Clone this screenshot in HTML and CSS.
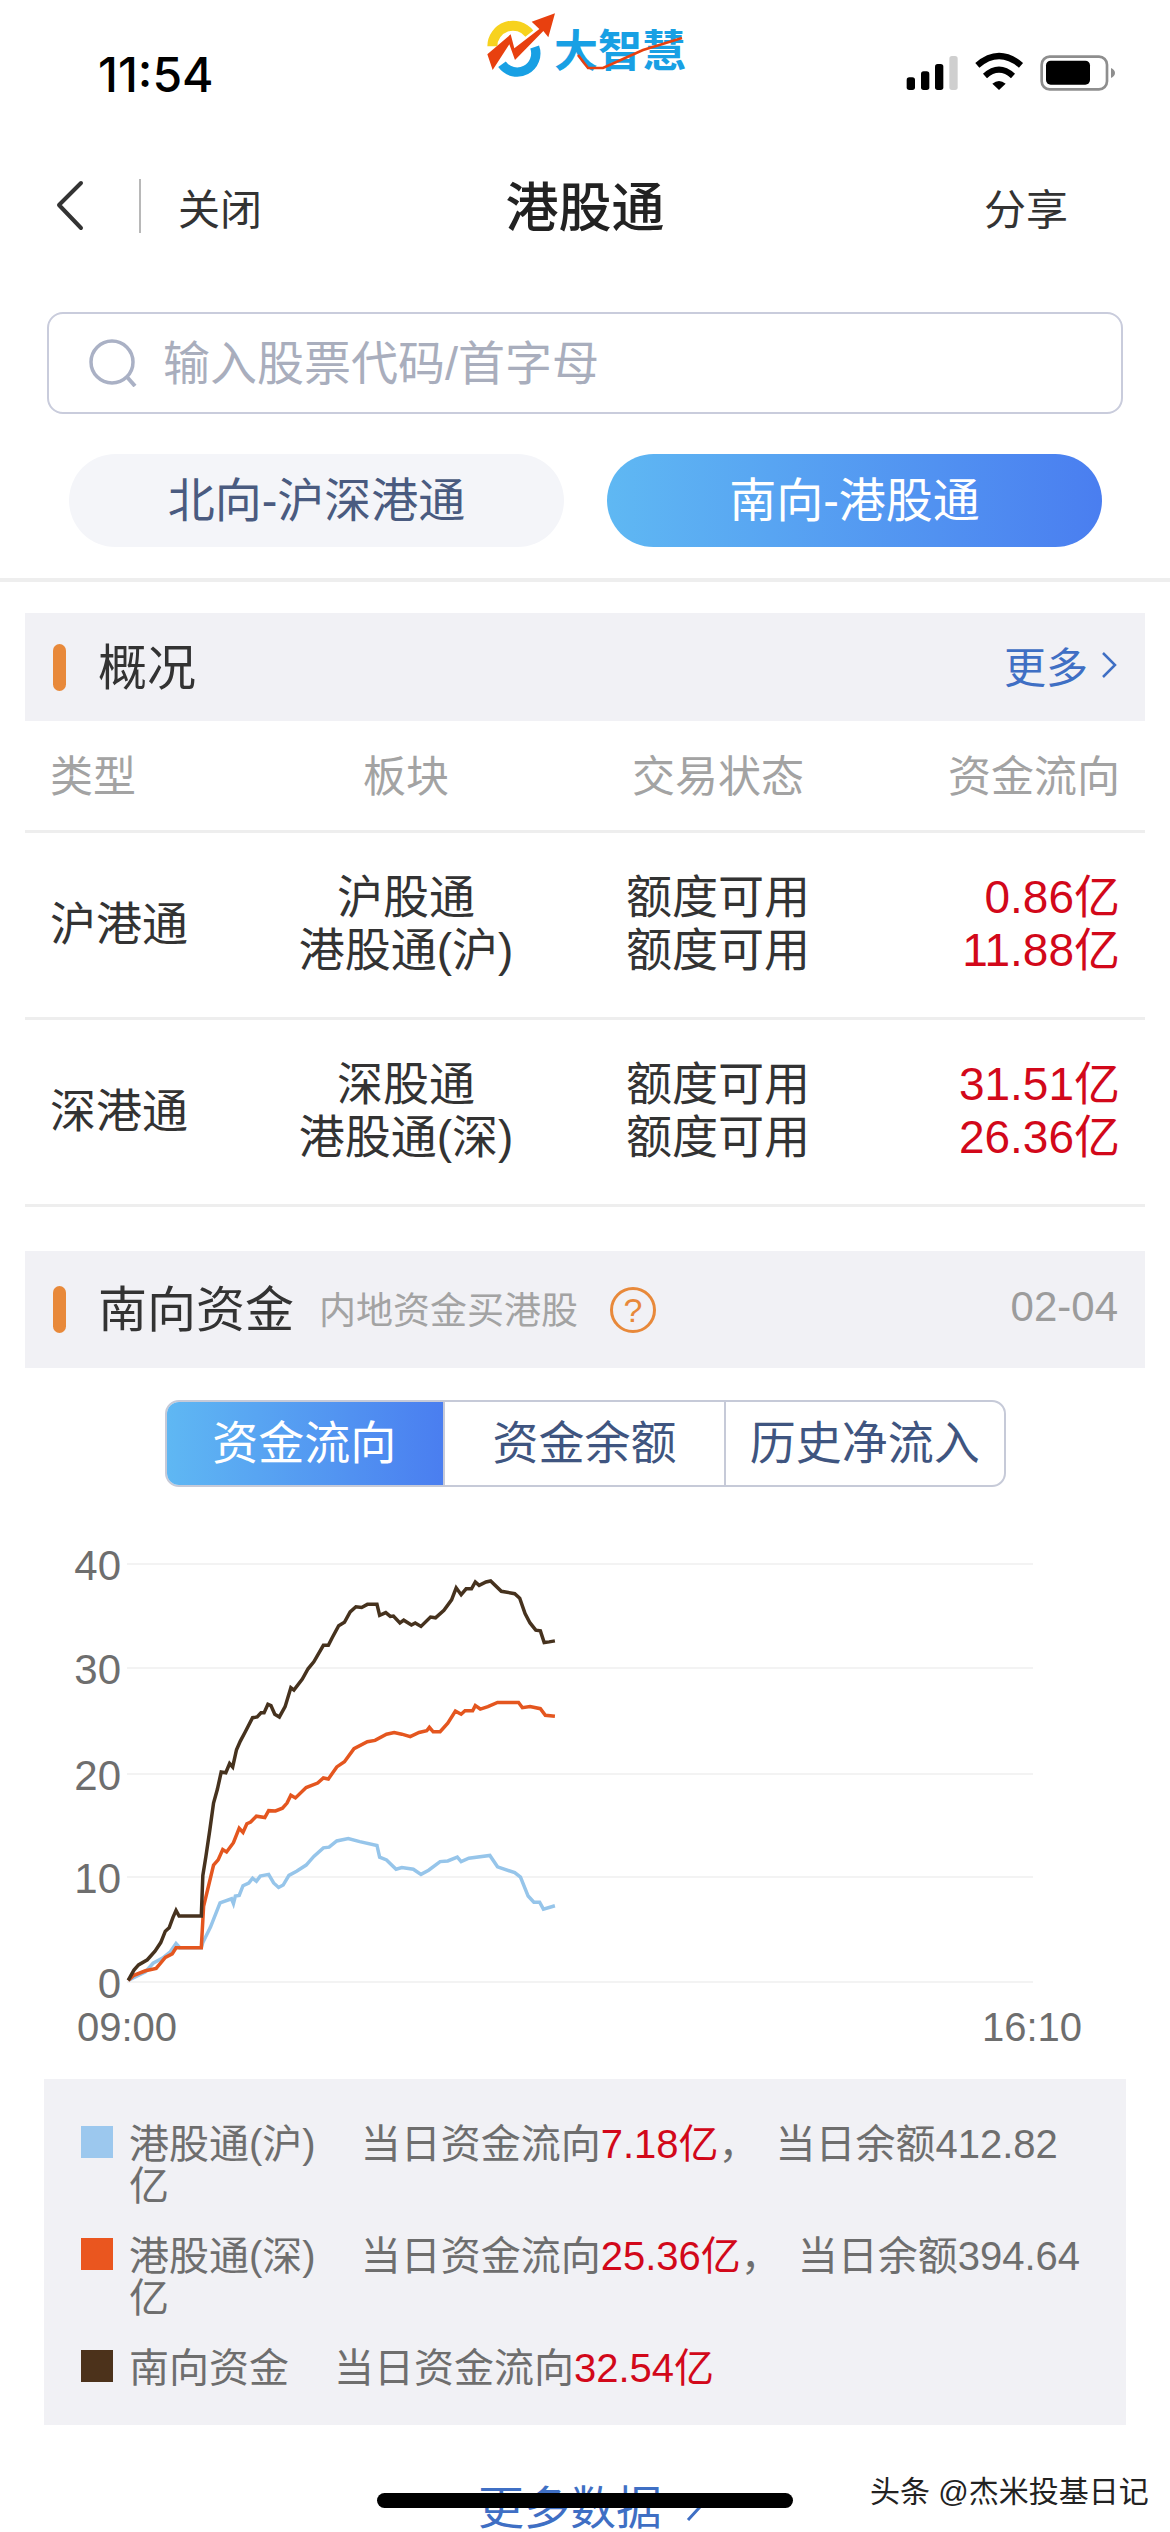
FILE: index.html
```html
<!DOCTYPE html>
<html lang="zh-CN">
<head>
    <meta charset="UTF-8">
    <title>港股通</title>
    <link rel="stylesheet" href="styles.css">
</head>
<body>
    <div class="page">
        <div class="status">
            <span class="time">11:54</span>
            <svg class="status-icons" width="235" height="60" viewBox="0 0 705 180">
                <rect x="35" y="100" width="25" height="38" rx="8"/>
                <rect x="78" y="82" width="25" height="56" rx="8"/>
                <rect x="120" y="60" width="25" height="78" rx="8"/>
                <rect x="163" y="36" width="25" height="102" rx="8" fill="#cfcfcf"/>
                <path d="M247 64Q312 8 378 64" fill="none" stroke="#000" stroke-width="19"/>
                <path d="M270 96Q312 58 354 96" fill="none" stroke="#000" stroke-width="18"/>
                <path d="M292 119Q312 103 332 119L312 138Z"/>
                <rect x="440" y="38" width="196" height="98" rx="24" fill="none" stroke="#8e8e8e" stroke-width="8"/>
                <rect x="453" y="50" width="132" height="72" rx="14"/>
                <path d="M648 72Q660 78 660 87Q660 96 648 102Z" fill="#8e8e8e"/>
            </svg>
        </div>

        <div class="logo">
            <svg width="110" height="75" viewBox="0 0 330 225">
                <path d="M37 124A62 62 0 0 1 148 86" fill="none" stroke="#f7d21e" stroke-width="30"/>
                <path d="M164 126A56 56 0 0 1 66 178" fill="none" stroke="#18a0e4" stroke-width="28"/>
                <path d="M22 148L92 88L103 130L178 72L155 50L225 25L205 97L190 78L105 165L88 118L38 195Z" fill="#e8400f"/>
            </svg>
            <span class="logo-text">大智慧</span>
            <svg class="logo-swoosh" width="110" height="40" viewBox="0 0 110 40">
                <path d="M4 18L14 31H29L69 13L108 1" fill="none" stroke="#e8400f" stroke-width="2.5"/>
            </svg>
        </div>

        <div class="nav">
            <div class="nav-left">
                <svg width="30" height="52" viewBox="0 0 30 52">
                    <path d="M26 3L4 25L26 48" fill="none" stroke="#333" stroke-width="4" stroke-linecap="round" stroke-linejoin="round"/>
                </svg>
                <span class="nav-sep"></span>
                <span>关闭</span>
            </div>
            <div class="nav-title">港股通</div>
            <div class="nav-right">分享</div>
        </div>

        <div class="search">
            <svg width="48" height="48" viewBox="0 0 48 48">
                <circle cx="23" cy="23" r="21" fill="none" stroke="#aab1c5" stroke-width="3.5"/>
                <path d="M38 38L46 47" fill="none" stroke="#aab1c5" stroke-width="4"/>
            </svg>
            <span class="search-text">输入股票代码/首字母</span>
        </div>

        <div class="tabs">
            <div class="tab">北向-沪深港通</div>
            <div class="tab active">南向-港股通</div>
        </div>

        <div class="rule"></div>

        <div class="sec-head first">
            <span class="sec-mark"></span>
            <span class="sec-title">概况</span>
            <span class="more">更多
                <svg width="18" height="30" viewBox="0 0 18 30"><path d="M3 3L15 15L3 27" fill="none" stroke="#3f6fc4" stroke-width="2.5"/></svg>
            </span>
        </div>

        <div class="grid grid-head">
            <div>类型</div>
            <div class="mid">板块</div>
            <div class="mid">交易状态</div>
            <div class="end">资金流向</div>
        </div>
        <div class="grid grid-row">
            <div>沪港通</div>
            <div class="mid">沪股通<br>港股通(沪)</div>
            <div class="mid">额度可用<br>额度可用</div>
            <div class="end red">0.86亿<br>11.88亿</div>
        </div>
        <div class="grid grid-row">
            <div>深港通</div>
            <div class="mid">深股通<br>港股通(深)</div>
            <div class="mid">额度可用<br>额度可用</div>
            <div class="end red">31.51亿<br>26.36亿</div>
        </div>

        <div class="sec-head second">
            <span class="sec-mark"></span>
            <span class="sec-title">南向资金</span>
            <span class="sec-sub">内地资金买港股</span>
            <span class="help">?</span>
            <span class="sec-date">02-04</span>
        </div>

        <div class="seg">
            <div class="seg-item active">资金流向</div>
            <div class="seg-item">资金余额</div>
            <div class="seg-item">历史净流入</div>
        </div>

        <svg class="chart" width="1170" height="560" viewBox="0 1500 1170 560">
            <g class="grid-lines">
                <line x1="127" x2="1033" y1="1564" y2="1564"/>
                <line x1="127" x2="1033" y1="1668" y2="1668"/>
                <line x1="127" x2="1033" y1="1774" y2="1774"/>
                <line x1="127" x2="1033" y1="1877" y2="1877"/>
                <line x1="127" x2="1033" y1="1982" y2="1982"/>
            </g>
            <g class="axis">
                <text x="121" y="1580">40</text>
                <text x="121" y="1684">30</text>
                <text x="121" y="1790">20</text>
                <text x="121" y="1893">10</text>
                <text x="121" y="1998">0</text>
            </g>
            <text class="axis-x" x="77" y="2041">09:00</text>
            <text class="axis-x" x="982" y="2041">16:10</text>
            <g transform="translate(0 1500) scale(.3827 .3444)">
                <polyline class="line blue" points="335,1395 380,1370 400,1345 425,1330 445,1312 460,1288 470,1300 526,1300 530,1285 550,1240 575,1170 605,1158 610,1172 615,1150 625,1148 635,1120 650,1112 660,1098 670,1107 680,1092 702,1087 715,1112 728,1125 740,1118 755,1090 775,1078 800,1060 820,1035 845,1010 860,1008 880,990 910,983 940,992 985,1003 992,1037 1010,1045 1035,1072 1050,1067 1080,1072 1100,1087 1120,1075 1150,1050 1170,1048 1195,1037 1205,1050 1225,1040 1280,1032 1300,1065 1345,1082 1360,1095 1380,1150 1395,1168 1410,1168 1420,1188 1450,1178"/>
                <polyline class="line orange" points="335,1395 350,1380 380,1367 408,1360 432,1328 450,1318 460,1300 526,1300 532,1180 545,1120 558,1060 570,1045 582,1015 592,1022 610,995 625,953 635,965 645,940 655,935 670,918 692,922 702,902 720,903 738,895 750,880 760,857 772,865 800,835 830,822 845,807 858,810 880,775 900,760 925,722 960,702 980,698 1010,680 1030,675 1050,680 1072,687 1095,675 1115,670 1122,660 1132,673 1150,673 1170,648 1190,613 1205,622 1215,612 1235,612 1242,597 1255,607 1275,600 1300,588 1355,588 1365,603 1385,600 1412,606 1425,625 1450,628"/>
                <polyline class="line brown" points="335,1395 350,1365 362,1350 385,1335 405,1310 420,1285 432,1252 442,1242 452,1212 460,1192 468,1208 526,1208 530,1090 538,1035 548,960 558,880 568,840 578,790 590,792 600,765 608,775 618,725 628,700 640,675 660,632 672,630 682,618 690,618 700,593 708,597 718,622 730,630 745,600 760,545 768,552 790,520 805,490 820,470 845,422 858,422 868,400 885,365 900,355 915,325 930,310 945,312 960,303 985,303 992,335 1008,327 1020,338 1028,337 1045,357 1055,349 1075,363 1085,357 1100,367 1125,340 1138,342 1160,320 1180,290 1192,255 1205,275 1218,258 1232,258 1242,238 1252,248 1270,238 1282,235 1310,265 1345,272 1358,285 1372,330 1385,357 1400,378 1412,380 1422,414 1435,412 1450,409"/>
            </g>
        </svg>

        <div class="legend">
            <div class="legend-row">
                <span class="swatch sw-blue"></span>
                <div class="legend-text"><span class="name">港股通(沪)</span>当日资金流向<span class="red">7.18亿</span><span class="comma">，</span>当日余额412.82<br>亿</div>
            </div>
            <div class="legend-row">
                <span class="swatch sw-orange"></span>
                <div class="legend-text"><span class="name">港股通(深)</span>当日资金流向<span class="red">25.36亿</span><span class="comma">，</span>当日余额394.64<br>亿</div>
            </div>
            <div class="legend-row">
                <span class="swatch sw-brown"></span>
                <div class="legend-text"><span class="name">南向资金</span>当日资金流向<span class="red">32.54亿</span></div>
            </div>
        </div>

        <div class="more-data">更多数据
            <svg width="16" height="30" viewBox="0 0 16 30"><path d="M2 3L13 15L2 27" fill="none" stroke="#3f6fc4" stroke-width="3"/></svg>
        </div>

        <div class="home-bar"></div>
        <div class="watermark">头条 @杰米投基日记</div>
    </div>
</body>
</html>
```

FILE: styles.css
```css
* {
    box-sizing: border-box;
}
body {
    margin: 0;
    background: #fff;
    font-family: "Liberation Sans", "Noto Sans CJK SC", sans-serif;
    color: #333;
}
.page {
    position: relative;
    width: 1170px;
    height: 2532px;
    overflow: hidden;
}
.red {
    color: #d2081a;
}

/* status bar */
.status {
    display: flex;
    justify-content: space-between;
    align-items: center;
    height: 148px;
    padding: 0 40px 0 98px;
}
.time {
    font-family: Inter, sans-serif;
    font-size: 48px;
    font-weight: 500;
    color: #000;
}
.logo {
    position: absolute;
    left: 480px;
    top: 5px;
    display: flex;
    width: 210px;
}
.logo-text {
    position: absolute;
    left: 74px;
    top: 22px;
    font-size: 44px;
    line-height: 50px;
    font-weight: 700;
    color: #18a0e4;
    white-space: nowrap;
}
.logo-swoosh {
    position: absolute;
    left: 94px;
    top: 32px;
}

/* nav */
.nav {
    display: grid;
    grid-template-columns: 1fr auto 1fr;
    align-items: center;
    height: 116px;
    padding: 0 55px;
    font-size: 42px;
}
.nav-left {
    display: flex;
    align-items: center;
}
.nav-sep {
    width: 2px;
    height: 54px;
    margin: 0 37px 0 54px;
    background: #b8b8b8;
}
.nav-title {
    padding-bottom: 4px;
    font-size: 53px;
    font-weight: 500;
    color: #222;
}
.nav-right {
    padding-right: 47px;
    text-align: right;
}

/* search */
.search {
    display: flex;
    align-items: center;
    gap: 26px;
    height: 102px;
    margin: 48px 47px 0;
    padding-left: 40px;
    border: 2px solid #c9ccdc;
    border-radius: 16px;
    color: #a9aebd;
}
.search-text {
    padding-bottom: 8px;
    font-size: 47px;
}

/* tabs */
.tabs {
    display: flex;
    gap: 43px;
    margin: 40px 68px 0 69px;
}
.tab {
    flex: 1;
    height: 93px;
    border-radius: 47px;
    background: #f4f5f9;
    color: #4a5b80;
    font-size: 47px;
    line-height: 93px;
    text-align: center;
}
.tab.active {
    background: linear-gradient(90deg, #5fb8f3, #4a7ef0);
    color: #fff;
}
.rule {
    height: 4px;
    margin-top: 31px;
    background: #eeeeee;
}

/* sections */
.sec-head {
    display: flex;
    align-items: center;
    margin: 0 25px;
    padding: 0 27px 0 28px;
    background: #f1f1f5;
}
.sec-head.first {
    height: 108px;
    margin-top: 31px;
}
.sec-head.second {
    height: 117px;
    margin-top: 44px;
}
.sec-mark {
    width: 13px;
    height: 47px;
    margin-right: 32px;
    border-radius: 7px;
    background: #e8893a;
}
.sec-title {
    margin-bottom: 8px;
    font-size: 49px;
    color: #333;
}
.more {
    display: flex;
    align-items: center;
    gap: 12px;
    margin-left: auto;
    margin-bottom: 5px;
    font-size: 42px;
    color: #3f6fc4;
}
.sec-sub {
    margin-left: 25px;
    margin-bottom: 3px;
    font-size: 37px;
    color: #a3a3a3;
}
.help {
    width: 46px;
    height: 46px;
    margin-left: 32px;
    border: 3px solid #e8893a;
    border-radius: 50%;
    color: #e8893a;
    font-size: 34px;
    line-height: 40px;
    text-align: center;
}
.sec-date {
    margin-left: auto;
    margin-bottom: 6px;
    font-size: 42px;
    color: #9c9c9c;
}

/* overview table */
.grid {
    display: grid;
    grid-template-columns: 231px 300px 324px 265px;
    align-items: center;
    margin: 0 25px;
    border-bottom: 3px solid #eeeeee;
}
.grid-head {
    height: 112px;
    padding-bottom: 6px;
    font-size: 43px;
    color: #a3a3a3;
}
.grid-row {
    height: 187px;
    padding-bottom: 2px;
    font-size: 46px;
    line-height: 53px;
}
.grid .mid {
    text-align: center;
}
.grid .end {
    padding-right: 25px;
    text-align: right;
}
.grid > div:first-child {
    padding-left: 25px;
}

/* segmented control */
.seg {
    display: flex;
    width: 841px;
    height: 87px;
    margin: 32px 0 0 165px;
    border: 2px solid #c6cad8;
    border-radius: 14px;
    overflow: hidden;
}
.seg-item {
    flex: 1;
    border-left: 2px solid #c6cad8;
    color: #3f5580;
    font-size: 46px;
    line-height: 83px;
    text-align: center;
}
.seg-item.active {
    margin: -2px 0 -2px -2px;
    border-left: none;
    background: linear-gradient(90deg, #5fb8f3, #4a7ef0);
    color: #fff;
    line-height: 87px;
}

/* chart */
.chart {
    display: block;
    margin-top: 13px;
}
.grid-lines line {
    stroke: #f3f3f3;
    stroke-width: 2;
}
.axis text {
    fill: #6e6e6e;
    font-size: 42px;
    text-anchor: end;
}
.axis-x {
    fill: #6e6e6e;
    font-size: 40px;
}
.line {
    fill: none;
    stroke-width: 3.5;
    vector-effect: non-scaling-stroke;
}
.line.blue {
    stroke: #96c5ea;
}
.line.orange {
    stroke: #e4561f;
}
.line.brown {
    stroke: #46321e;
}

/* legend */
.legend {
    display: flex;
    flex-direction: column;
    gap: 28px;
    height: 346px;
    margin: 19px 44px 0;
    padding: 44px 0 0 37px;
    background: #f1f1f5;
}
.legend-row {
    display: flex;
    gap: 16px;
}
.swatch {
    flex: none;
    width: 32px;
    height: 32px;
    margin-top: 3px;
}
.sw-blue {
    background: #9cc8ee;
}
.sw-orange {
    background: #ea561f;
}
.sw-brown {
    background: #4c321b;
}
.legend-text {
    font-size: 40px;
    line-height: 42px;
    color: #6e6e6e;
}
.name {
    margin-right: 45px;
}
.comma {
    margin-right: 17px;
}

/* bottom */
.more-data {
    display: flex;
    align-items: center;
    gap: 24px;
    margin: 60px 0 0 478px;
    font-size: 46px;
    line-height: 46px;
    color: #3f6fc4;
}
.home-bar {
    position: absolute;
    left: 377px;
    top: 2493px;
    width: 416px;
    height: 15px;
    border-radius: 8px;
    background: #000;
}
.watermark {
    position: absolute;
    left: 870px;
    top: 2472px;
    font-size: 30px;
    line-height: 40px;
    color: #222;
    white-space: nowrap;
    text-shadow: 0 0 2px #fff, 0 0 2px #fff;
}
```
